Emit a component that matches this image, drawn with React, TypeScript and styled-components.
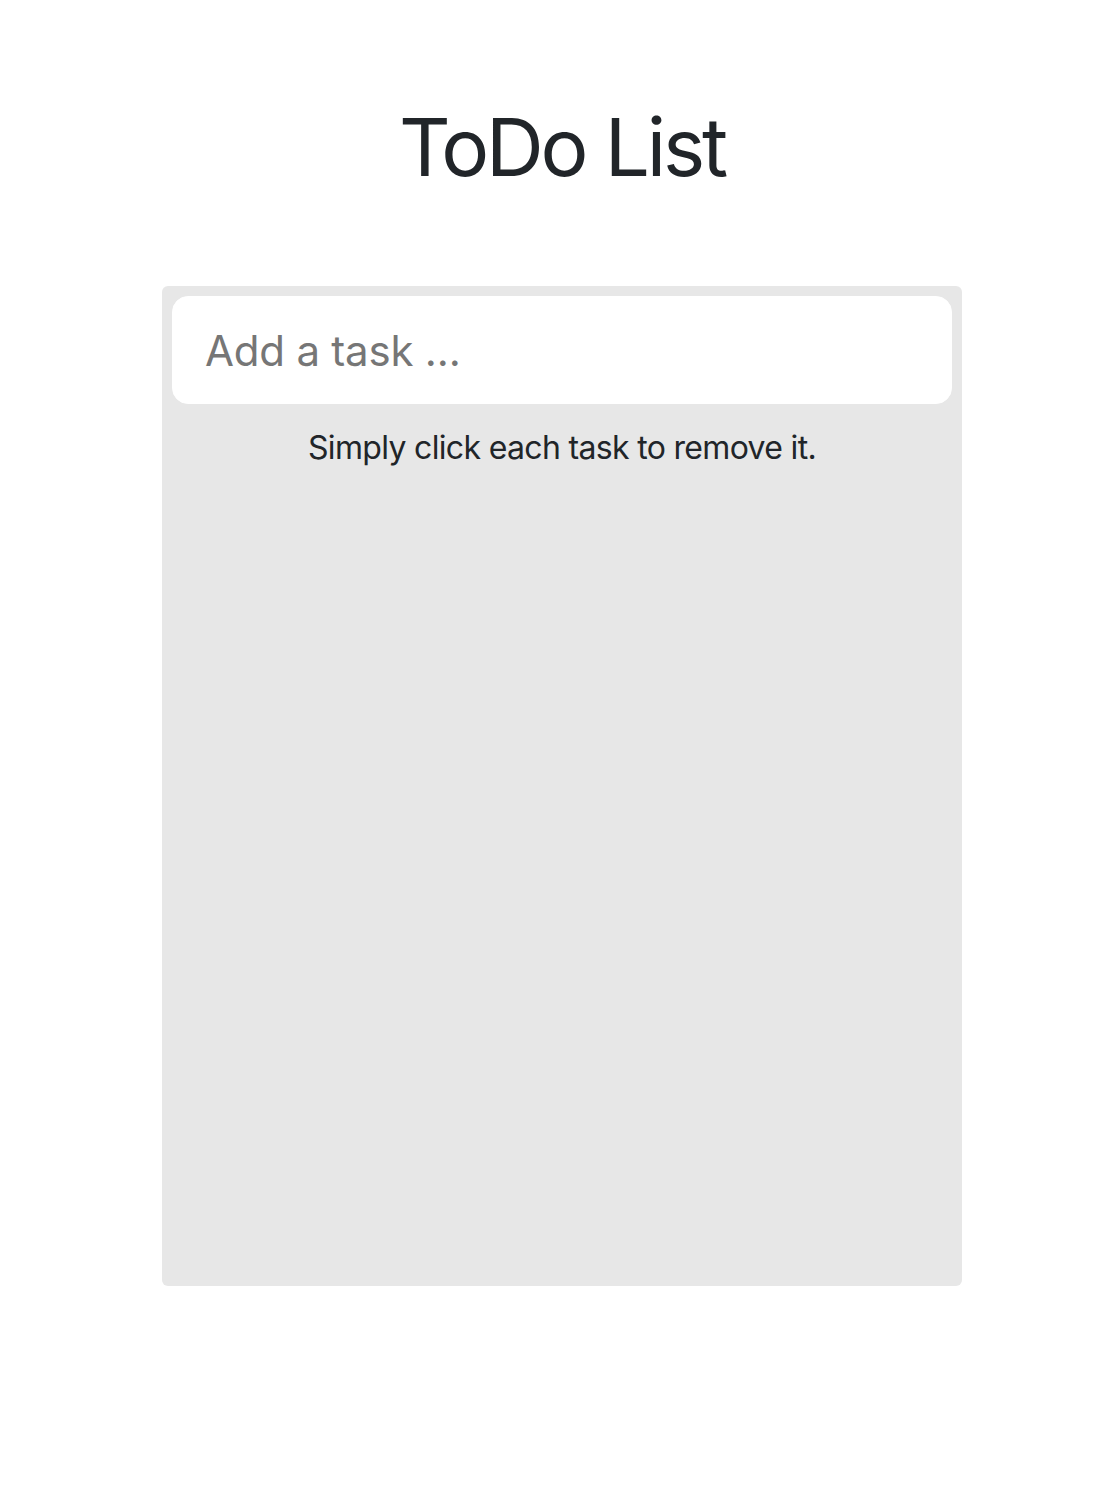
import { useState } from "react";
import styled, { createGlobalStyle } from "styled-components";

const GlobalStyle = createGlobalStyle`
  body {
    margin: 0;
    background: #ffffff;
    color: #212529;
    font-family: Inter, "Noto Sans", sans-serif;
  }
  * {
    box-sizing: border-box;
  }
`;

export default function App() {
  const [task, setTask] = useState("");
  const [tasks, setTasks] = useState<string[]>([]);

  const addTask = (e: React.FormEvent) => {
    e.preventDefault();
    if (!task.trim()) return;
    setTasks([...tasks, task.trim()]);
    setTask("");
  };

  const removeTask = (index: number) => {
    setTasks(tasks.filter((_, i) => i !== index));
  };

  return (
    <StPage>
      <GlobalStyle />
      <StTitle>ToDo List</StTitle>
      <StPanel>
        <form onSubmit={addTask}>
          <StInput
            type="text"
            value={task}
            placeholder="Add a task ..."
            onChange={(e) => setTask(e.target.value)}
          />
        </form>
        <StHint>Simply click each task to remove it.</StHint>
        <StList>
          {tasks.map((t, index) => (
            <StItem key={index} onClick={() => removeTask(index)}>
              {t}
            </StItem>
          ))}
        </StList>
      </StPanel>
    </StPage>
  );
}

const StPage = styled.div`
  display: flex;
  flex-direction: column;
  align-items: center;
  padding: 99px 0 0 8px;
`;

const StTitle = styled.h1`
  margin: 0 0 91px;
  font-size: 80px;
  font-weight: 400;
  line-height: 96px;
  letter-spacing: -0.04em;
  color: #212529;
`;

const StPanel = styled.div`
  width: 800px;
  height: 1000px;
  padding: 10px;
  background: #e7e7e7;
  border-radius: 6px;
`;

const StInput = styled.input`
  display: block;
  width: 100%;
  height: 108px;
  padding: 0 32px;
  border: 1px solid #ffffff;
  border-radius: 16px;
  background: #ffffff;
  font-family: inherit;
  font-size: 42px;
  letter-spacing: -0.005em;
  color: #212529;
  outline: none;

  &::placeholder {
    color: #767676;
  }
`;

const StHint = styled.p`
  margin: 20px 0 0;
  text-align: center;
  font-size: 32px;
  line-height: 48px;
  letter-spacing: -0.021em;
  color: #212529;
`;

const StList = styled.ul`
  list-style: none;
  margin: 0;
  padding: 0;
`;

const StItem = styled.li`
  padding: 16px 32px;
  font-size: 32px;
  cursor: pointer;
`;
